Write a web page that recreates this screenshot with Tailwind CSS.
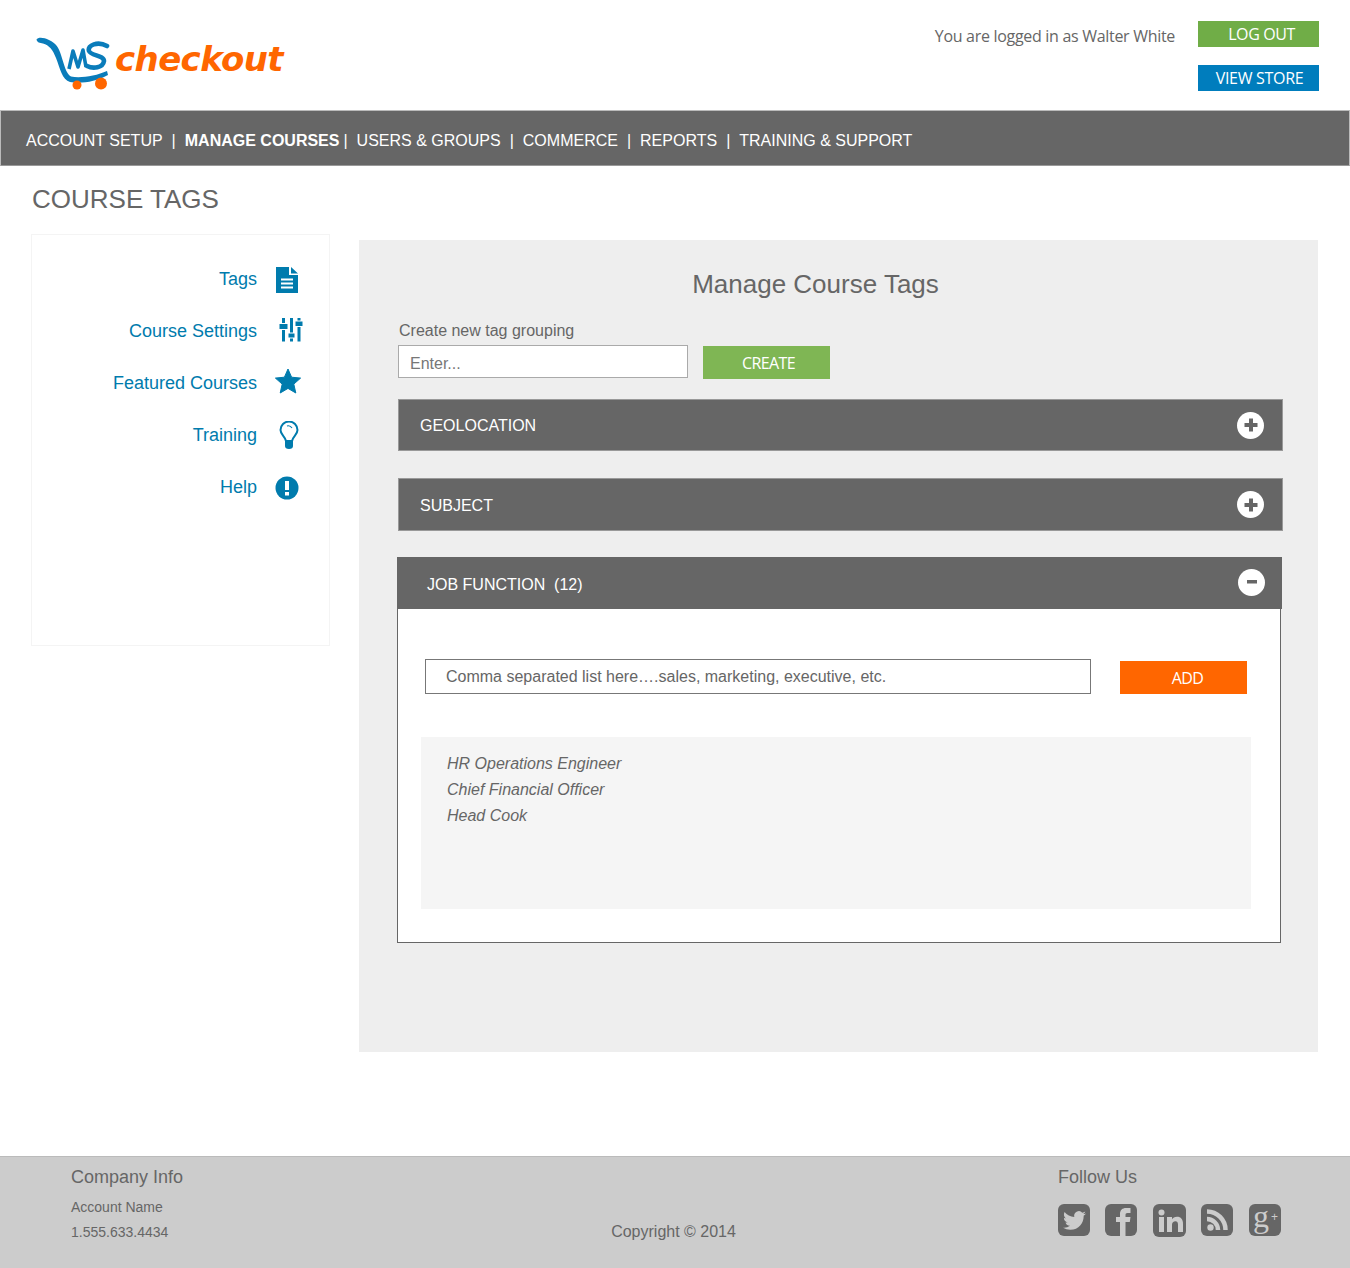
<!DOCTYPE html>
<html lang="en">
  <head>
    <meta charset="UTF-8" />
    <title>LMS Checkout - Course Tags</title>
    <script src="https://cdn.jsdelivr.net/npm/@tailwindcss/browser@4"></script>
  </head>
  <body class="bg-white text-[#666] font-['Liberation_Sans',sans-serif] w-[1350px] h-[1268px] overflow-hidden flex flex-col">
    <!-- header -->
    <header class="h-[110px] flex justify-between shrink-0">
      <div class="pl-[36px] pt-[36px] flex items-start">
        <svg width="74" height="56" viewBox="0 0 74 56" class="shrink-0">
          <path d="M0.5 3.5 C2 1 8 1.5 13 4 C20 7 23 12 25 19 C28 28 30 38 35 40.5 C44 42.5 60 40 71 35 L72 39 C60 46 44 48 34 46 C26 44 24 32 20 22 C17 14 13 9 7 7.5 C4 7 1 6.5 0.5 3.5 Z" fill="#0a7cba" />
          <path d="M33 33 L37 15 L42 31 L47 14 L50 31" fill="none" stroke="#0a7cba" stroke-width="3.6" stroke-linejoin="round" />
          <path d="M71 10 C62 5 51 9 53 15 C55 20 68 19 68 25 C67 32 57 33 51 30" fill="none" stroke="#0a7cba" stroke-width="4.6" stroke-linecap="round" />
          <circle cx="41" cy="49" r="4.5" fill="#ff6600" />
          <circle cx="65" cy="47.5" r="6" fill="#ff6600" />
        </svg>
        <span class="ml-[5px] mt-[1px] text-[34px] leading-[44px] font-bold italic text-[#ff6600] font-['DejaVu_Sans',sans-serif] tracking-[-0.6px]">checkout</span>
      </div>
      <div class="flex pr-[31px] pt-[21px] font-['Open_Sans',sans-serif]">
        <div class="text-[16px] leading-[30px] pr-[23px] tracking-[-0.3px]">You are logged in as Walter White</div>
        <div class="flex flex-col gap-[18px] items-start">
          <a class="w-[121px] h-[26px] bg-[#70ad47] text-white text-[16px] leading-[26px] text-center pl-[6px] tracking-[-0.4px]">LOG OUT</a>
          <a class="w-[121px] h-[26px] bg-[#007dbd] text-white text-[16px] leading-[26px] text-center pl-[2px] tracking-[-0.3px]">VIEW STORE</a>
        </div>
      </div>
    </header>

    <!-- main nav -->
    <nav class="h-[56px] shrink-0 bg-[#666] border border-[#bbb] border-b-[#999] text-white text-[16px] flex items-center pl-[25px] pt-[5px] whitespace-pre">
      <span>ACCOUNT SETUP</span><span class="mx-[9px]">|</span><span class="font-bold">MANAGE COURSES</span><span class="ml-[4px] mr-[9px]">|</span><span>USERS &amp; GROUPS</span><span class="mx-[9px]">|</span><span>COMMERCE</span><span class="mx-[9px]">|</span><span>REPORTS</span><span class="mx-[9px]">|</span><span>TRAINING &amp; SUPPORT</span>
    </nav>

    <main class="flex-1 relative">
      <h1 class="pl-[32px] pt-[16px] text-[26px] leading-[34px]">COURSE TAGS</h1>
      <div class="flex items-start pl-[31px] pr-[32px] pt-[18px]">
        <!-- side menu -->
        <aside class="w-[299px] h-[412px] shrink-0 border border-[#f4f4f4] pt-[24px] flex flex-col gap-[12px] text-[18px] text-[#007bad]">
          <a class="h-[40px] flex items-center justify-end">
            <span>Tags</span>
            <span class="w-[72px] flex justify-start pl-[18px]">
              <svg width="24" height="28" viewBox="0 0 24 28" class="translate-y-[1px]"><path d="M1 1 H14 V9 H23 V27 H1 Z M16 1 L23 7.5 H16 Z" fill="#007bad" /><path d="M6 13.5 H18 M6 17.5 H18 M6 21.5 H18" stroke="#fff" stroke-width="2" /></svg>
            </span>
          </a>
          <a class="h-[40px] flex items-center justify-end">
            <span>Course Settings</span>
            <span class="w-[72px] flex justify-start pl-[22px]">
              <svg width="24" height="24" viewBox="0 0 24 24" fill="#007bad" class="translate-y-[-1px]">
                <path d="M3 0 H6 V5 H3 Z M0.5 6 H8.5 V11 H0.5 Z M3 12 H6 V23.5 H3 Z" />
                <path d="M11 0 H14 V14.5 H11 Z M9.5 15.5 H15.5 V19.5 H9.5 Z M11 20.5 H14 V23.5 H11 Z" />
                <path d="M18.5 0 H21.5 V2.5 H18.5 Z M16.5 3.5 H23.5 V8 H16.5 Z M18.5 9 H21.5 V23.5 H18.5 Z" />
              </svg>
            </span>
          </a>
          <a class="h-[40px] flex items-center justify-end">
            <span>Featured Courses</span>
            <span class="w-[72px] flex justify-start pl-[18px]">
              <svg width="26" height="26" viewBox="0 0 26 26" class="translate-y-[-2px]"><path d="M13 1 L16.6 9.2 L25.6 10.1 L18.8 16.1 L20.8 25 L13 20.4 L5.2 25 L7.2 16.1 L0.4 10.1 L9.4 9.2 Z" fill="#007bad" stroke="#007bad" stroke-linejoin="round" /></svg>
            </span>
          </a>
          <a class="h-[40px] flex items-center justify-end">
            <span>Training</span>
            <span class="w-[72px] flex justify-start pl-[22px]">
              <svg width="20" height="30" viewBox="0 0 20 30" class="translate-y-[1px]"><path d="M7 20 C6 15 1.5 13.5 1.5 9 A8.5 8.5 0 0 1 18.5 9 C18.5 13.5 14 15 13 20 Z" fill="none" stroke="#007bad" stroke-width="2" /><path d="M6 20 H14 V25 Q14 28 10 28 Q6 28 6 25 Z" fill="#007bad" /><path d="M8 5 Q11 4 13 7" fill="none" stroke="#007bad" stroke-width="1.2" /></svg>
            </span>
          </a>
          <a class="h-[40px] flex items-center justify-end">
            <span>Help</span>
            <span class="w-[72px] flex justify-start pl-[18px]">
              <svg width="24" height="24" viewBox="0 0 24 24" class="translate-y-[1px]"><circle cx="12" cy="12" r="11.5" fill="#007bad" /><rect x="10" y="5" width="4" height="9" fill="#fff" /><rect x="10" y="16" width="4" height="3.5" fill="#fff" /></svg>
            </span>
          </a>
        </aside>

        <!-- tag manager panel -->
        <section class="ml-[29px] mt-[6px] w-[959px] h-[812px] bg-[#eee] shrink-0">
          <h2 class="pt-[27px] text-center text-[26px] leading-[34px] ml-[-46px]">Manage Course Tags</h2>
          <div class="pl-[39px] pr-[35px]">
            <label class="block mt-[20px] ml-[1px] text-[16px] leading-[20px]">Create new tag grouping</label>
            <div class="flex items-start mt-[4px] gap-[15px]">
              <input class="w-[290px] h-[33px] bg-white border border-[#aaa] px-[11px] pt-[4px] text-[16px] placeholder:text-[#777]" placeholder="Enter..." />
              <button class="w-[127px] h-[33px] mt-[1px] bg-[#7fb654] text-white text-[16px] font-['Open_Sans',sans-serif] pl-[4px] tracking-[-0.6px]">CREATE</button>
            </div>

            <div class="mt-[20px] h-[52px] bg-[#666] border-t border-x border-b border-[#999] flex items-center justify-between pl-[21px] pr-[18px] text-white text-[16px]">
              <span class="pt-[2px]">GEOLOCATION</span>
              <span class="w-[27px] h-[27px] rounded-full bg-white flex items-center justify-center">
                <svg width="14" height="14" viewBox="0 0 14 14"><path d="M5 0.5 H9 V5 H13.5 V9 H9 V13.5 H5 V9 H0.5 V5 H5 Z" fill="#666" /></svg>
              </span>
            </div>
            <div class="mt-[27px] h-[53px] bg-[#666] border border-[#999] flex items-center justify-between pl-[21px] pr-[18px] text-white text-[16px]">
              <span class="pt-[2px]">SUBJECT</span>
              <span class="w-[27px] h-[27px] rounded-full bg-white flex items-center justify-center">
                <svg width="14" height="14" viewBox="0 0 14 14"><path d="M5 0.5 H9 V5 H13.5 V9 H9 V13.5 H5 V9 H0.5 V5 H5 Z" fill="#666" /></svg>
              </span>
            </div>

            <div class="mt-[26px] ml-[-1px] w-[885px]">
              <div class="h-[52px] bg-[#666] flex items-center justify-between pl-[30px] pr-[17px] text-white text-[16px] whitespace-pre">
                <span class="pt-[4px]">JOB FUNCTION  (12)</span>
                <span class="w-[27px] h-[27px] rounded-full bg-white flex items-center justify-center mb-[2px]">
                  <svg width="10" height="4" viewBox="0 0 10 4"><rect width="10" height="3.5" fill="#666" /></svg>
                </span>
              </div>
              <div class="w-[884px] h-[334px] bg-white border-x border-b border-[#666] pl-[27px] pt-[50px]">
                <div class="flex items-start">
                  <input class="w-[666px] h-[35px] border border-[#777] pl-[20px] text-[16px] placeholder:text-[#666]" placeholder="Comma separated list here….sales, marketing, executive, etc." />
                  <button class="ml-[29px] mt-[2px] w-[127px] h-[33px] bg-[#ff6600] text-white text-[16px] font-['Open_Sans',sans-serif] pl-[8px] tracking-[-0.6px]">ADD</button>
                </div>
                <ul class="mt-[43px] ml-[-4px] w-[830px] h-[172px] bg-[#f5f5f5] pl-[26px] pt-[14px] text-[16px] leading-[26px] italic">
                  <li>HR Operations Engineer</li>
                  <li>Chief Financial Officer</li>
                  <li>Head Cook</li>
                </ul>
              </div>
            </div>
          </div>
        </section>
      </div>
    </main>

    <!-- footer -->
    <footer class="h-[112px] shrink-0 bg-[#ccc] border-t border-[#bbb] flex justify-between pl-[71px] pr-[69px] relative">
      <div>
        <div class="pt-[9px] text-[18px] leading-[22px]">Company Info</div>
        <div class="mt-[7px] text-[14px] leading-[25px]">Account Name<br />1.555.633.4434</div>
      </div>
      <div class="self-end pb-[26px] text-[16px] leading-[20px] ml-[106px]">Copyright © 2014</div>
      <div class="w-[223px]">
        <div class="pt-[9px] text-[18px] leading-[22px]">Follow Us</div>
        <div class="mt-[16px] flex gap-[15px]">
          <span class="w-[32px] h-[32px] rounded-[6px] bg-[#666] flex items-center justify-center">
            <svg width="23" height="23" viewBox="0 0 24 24"><path fill="#ccc" d="M23.953 4.57a10 10 0 01-2.825.775 4.958 4.958 0 002.163-2.723c-.951.555-2.005.959-3.127 1.184a4.92 4.92 0 00-8.384 4.482C7.69 8.095 4.067 6.13 1.64 3.162a4.822 4.822 0 00-.666 2.475c0 1.71.87 3.213 2.188 4.096a4.904 4.904 0 01-2.228-.616v.06a4.923 4.923 0 003.946 4.827 4.996 4.996 0 01-2.212.085 4.936 4.936 0 004.604 3.417 9.867 9.867 0 01-6.102 2.105c-.39 0-.779-.023-1.17-.067a13.995 13.995 0 007.557 2.209c9.053 0 13.998-7.496 13.998-13.985 0-.21 0-.42-.015-.63A9.935 9.935 0 0024 4.59z" /></svg>
          </span>
          <span class="w-[32px] h-[32px] rounded-[6px] bg-[#666] overflow-hidden">
            <svg width="32" height="32" viewBox="-2 0 32 32"><path fill="#ccc" d="M13 32 V18 H9 V13 H13 V10 C13 6 15.5 4 19 4 H23.5 V9 H20.5 C19 9 18.5 9.8 18.5 11 V13 H23.5 L22.8 18 H18.5 V32 Z" /></svg>
          </span>
          <span class="ml-[1px] w-[33px] h-[33px] rounded-[6px] bg-[#666]">
            <svg width="33" height="33" viewBox="0 0 33 33" fill="#ccc"><circle cx="8.5" cy="8.5" r="3" /><rect x="6" y="13" width="5" height="15" /><path d="M14 13 H19 V15.2 C20 13.8 21.5 12.8 24 12.8 C28 12.8 30 15.4 30 20 V28 H25 V20.5 C25 18.4 24.2 17.2 22.4 17.2 C20.4 17.2 19 18.6 19 20.8 V28 H14 Z" /></svg>
          </span>
          <span class="w-[32px] h-[32px] rounded-[6px] bg-[#666]">
            <svg width="32" height="32" viewBox="0 0 32 32" fill="none" stroke="#ccc" stroke-width="4.5"><circle cx="9.5" cy="23.5" r="3.2" fill="#ccc" stroke="none" /><path d="M6 15 A11 11 0 0 1 17 26" /><path d="M6 7.5 A18.5 18.5 0 0 1 24.5 26" /></svg>
          </span>
          <span class="ml-[1px] w-[32px] h-[32px] rounded-[6px] bg-[#666] text-[#ccc] relative">
            <span class="absolute left-[4px] top-[-4px] font-['Liberation_Serif',serif] text-[32px] leading-[32px]">g</span>
            <span class="absolute right-[3px] top-[7px] text-[12px] leading-[12px]">+</span>
          </span>
        </div>
      </div>
    </footer>
  </body>
</html>
